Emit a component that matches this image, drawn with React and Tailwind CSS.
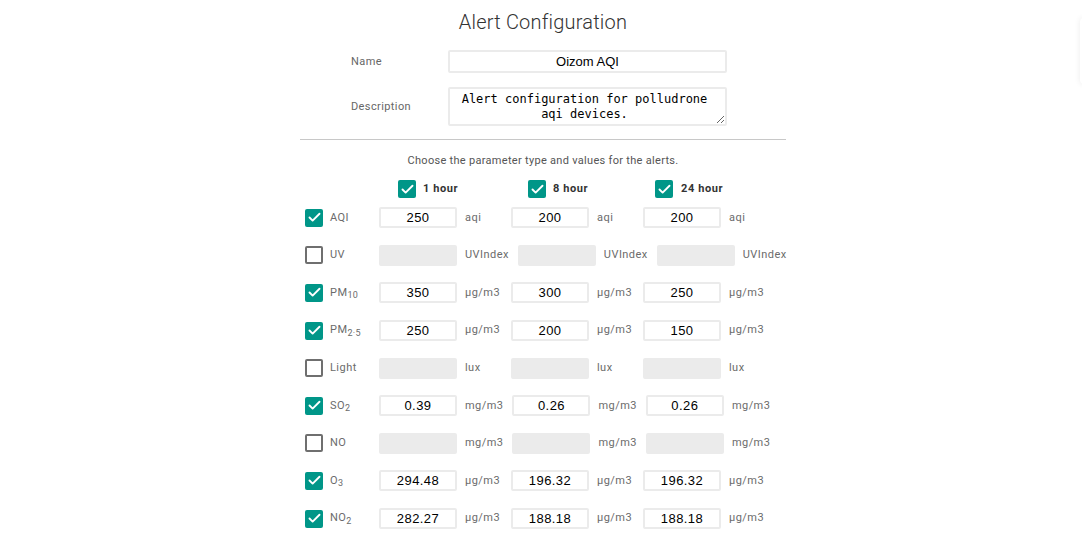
import { Check } from 'lucide-react';

const rows = [
    { label: 'AQI', on: true, unit: 'aqi', vals: ['250', '200', '200'] },
    { label: 'UV', on: false, unit: 'UVIndex', vals: ['', '', ''] },
    { label: 'PM', sub: '10', on: true, unit: 'µg/m3', vals: ['350', '300', '250'] },
    { label: 'PM', sub: '2·5', on: true, unit: 'µg/m3', vals: ['250', '200', '150'] },
    { label: 'Light', on: false, unit: 'lux', vals: ['', '', ''] },
    { label: 'SO', sub: '2', on: true, unit: 'mg/m3', vals: ['0.39', '0.26', '0.26'] },
    { label: 'NO', on: false, unit: 'mg/m3', vals: ['', '', ''] },
    { label: 'O', sub: '3', on: true, unit: 'µg/m3', vals: ['294.48', '196.32', '196.32'] },
    { label: 'NO', sub: '2', on: true, unit: 'µg/m3', vals: ['282.27', '188.18', '188.18'] },
];

function Box({ on }) {
    if (on) {
        return (
            <span className="flex h-[18px] w-[18px] shrink-0 items-center justify-center rounded-[2px] bg-[#009688]">
                <Check className="h-[15px] w-[15px] text-white" strokeWidth={3} />
            </span>
        );
    }
    return <span className="h-[18px] w-[18px] shrink-0 rounded-[2px] border-2 border-[#6f6f6f]" />;
}

function Field({ value, on }) {
    return (
        <input
            readOnly
            disabled={!on}
            value={value}
            className={
                'h-[21px] w-[78px] shrink-0 rounded-[2px] border-2 text-center text-[13px] text-black outline-none font-["Liberation_Sans",Arial,sans-serif] ' +
                (on ? 'border-[#ebebeb] bg-white' : 'border-[#ebebeb] bg-[#ebebeb]')
            }
        />
    );
}

export default function App() {
    return (
        <div className="relative min-h-[544px] overflow-hidden bg-white font-['Roboto',sans-serif]">
            <div className="absolute right-[-60px] top-[18px] h-[66px] w-[62px] rounded bg-white shadow-[0_0_6px_rgba(0,0,0,0.08)]" />

            <div className="flex justify-center pl-[4px]">
                <div className="w-[486px]">
                    <h1 className="pt-[9px] text-center text-[20px] leading-[26px] font-light tracking-[0.2px] text-[#333]">
                        Alert Configuration
                    </h1>

                    <div className="mt-[15px] flex items-center">
                        <span className="ml-[51px] w-[97px] pt-[2px] text-[11px] tracking-[0.4px] text-[#666]">Name</span>
                        <input
                            readOnly
                            value="Oizom AQI"
                            className="h-[23px] w-[279px] rounded-[2px] border-2 border-[#ebebeb] text-center text-[13px] text-black outline-none font-['Liberation_Sans',Arial,sans-serif]"
                        />
                    </div>

                    <div className="mt-[14px] flex items-center">
                        <span className="ml-[51px] w-[97px] pt-[1px] text-[11px] tracking-[0.4px] text-[#666]">Description</span>
                        <textarea
                            readOnly
                            value="Alert configuration for polludrone aqi devices."
                            className="h-[39px] w-[279px] resize rounded-[2px] border-2 border-[#ebebeb] pl-[6px] pr-[12px] pt-[3px] text-center text-[12px] leading-[15px] text-black outline-none font-['DejaVu_Sans_Mono',monospace]"
                        />
                    </div>

                    <hr className="mt-[13px] border-t border-[#c8c8c8]" />

                    <p className="mt-[14px] text-center text-[11px] leading-[14px] tracking-[0.3px] text-[#555]">
                        Choose the parameter type and values for the alerts.
                    </p>

                    <div className="mt-[11px] flex h-[20px] items-center pl-[98px] text-[11px] font-bold tracking-[0.6px] text-[#333]">
                        <div className="flex w-[130px] items-center gap-[7px]">
                            <Box on /> <span>1 hour</span>
                        </div>
                        <div className="flex w-[127px] items-center gap-[7px]">
                            <Box on /> <span>8 hour</span>
                        </div>
                        <div className="flex items-center gap-[8px]">
                            <Box on /> <span>24 hour</span>
                        </div>
                    </div>

                    <div className="pl-[5px]">
                        {rows.map((r, i) => (
                            <div key={i} className="flex h-[37.6px] items-center text-[11px] tracking-[0.45px] whitespace-nowrap text-[#6b6b6b]">
                                <Box on={r.on} />
                                <span className="ml-[7px] w-[49px] shrink-0">
                                    {r.label}
                                    {r.sub && <sub className="text-[9px] tracking-[0.3px]">{r.sub}</sub>}
                                </span>
                                {r.vals.map((v, j) => (
                                    <div key={j} className="flex shrink-0 items-center">
                                        <Field value={v} on={r.on} />
                                        <span className="ml-[8px] mr-[9px] min-w-[37px] shrink-0">{r.unit}</span>
                                    </div>
                                ))}
                            </div>
                        ))}
                    </div>
                </div>
            </div>
        </div>
    );
}
